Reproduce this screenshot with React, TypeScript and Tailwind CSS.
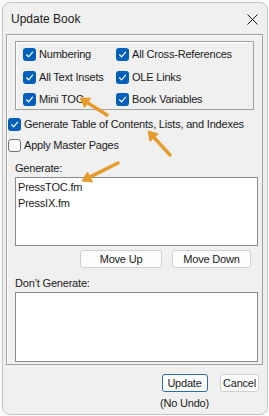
import React, { FC } from "react";

const FONT = "font-['Liberation_Sans',Arial,sans-serif]";
const TXT = "text-[11px] tracking-[-0.2px] text-[#1a1a1a] whitespace-nowrap";

const CheckBox: FC<{ checked?: boolean }> = ({ checked }) => {
    if (!checked) {
        return <span className="block w-[13px] h-[13px] shrink-0 rounded-[3px] border border-[#737373] bg-[#f9f9f9]"></span>;
    }
    return (
        <span className="flex w-[13px] h-[13px] shrink-0 items-center justify-center rounded-[3px] bg-[#005fb8]">
            <svg width="9" height="9" viewBox="0 0 9 9" fill="none">
                <path d="M1.5 4.8 L3.6 6.8 L7.6 2.2" stroke="#fff" strokeWidth="1.2" strokeLinecap="round" strokeLinejoin="round" />
            </svg>
        </span>
    );
};

const Option: FC<{ label: string, checked?: boolean, className?: string }> = ({ label, checked, className }) => (
    <div className={"flex items-center gap-[3px] h-[20px] " + (className ?? "")}>
        <CheckBox checked={checked} />
        <span className={TXT + " leading-none"}>{label}</span>
    </div>
);

const Arrow: FC<{ x1: number, y1: number, x2: number, y2: number }> = ({ x1, y1, x2, y2 }) => {
    // arrowhead points at (x2, y2)
    const len = Math.hypot(x2 - x1, y2 - y1);
    const ux = (x2 - x1) / len;
    const uy = (y2 - y1) / len;
    const head = 9;
    const half = 5.5;
    const bx = x2 - ux * head;
    const by = y2 - uy * head;
    const pts = `${x2},${y2} ${bx - uy * half},${by + ux * half} ${bx + uy * half},${by - ux * half}`;
    return (
        <g>
            <line x1={x1} y1={y1} x2={bx + ux * 1} y2={by + uy * 1} stroke="#e59c2c" strokeWidth="3.5" strokeLinecap="round" />
            <polygon points={pts} fill="#e59c2c" stroke="#e59c2c" strokeWidth="1" strokeLinejoin="round" />
        </g>
    );
};

const btn = "h-[18px] rounded-[3px] border bg-[#fdfdfd] leading-none " + TXT;

const App: FC = () => {
    return (
        <div className={"relative w-[269px] h-[416px] bg-[#f9f9f9] pt-[2px] pl-[2px] " + FONT}>
            <div className="w-[266px] h-[413px] rounded-[8px] border border-[#c4c4c4] bg-[#f0f0f0] flex flex-col">

                <div className="h-[31px] flex items-center justify-between pl-[8px] pr-[9px] pt-[1px]">
                    <span className="text-[12px] text-[#1a1a1a]">Update Book</span>
                    <svg width="11" height="11" viewBox="0 0 11 11">
                        <path d="M0.5 0.5 L10.5 10.5 M10.5 0.5 L0.5 10.5" stroke="#1a1a1a" strokeWidth="1" />
                    </svg>
                </div>

                <div className="ml-[3px] w-[257px] h-[331px] border border-[#a0a0a0] shadow-[inset_1px_1px_0_#ffffff] flex flex-col pl-[8px]">

                    <div className="mt-[6px] w-[239px] h-[69px] border border-[#a0a0a0] shadow-[inset_1px_1px_0_#ffffff] grid grid-cols-[93px_1fr] content-start pt-[1px] pl-[7px]">
                        <Option label="Numbering" checked className="h-[23px]" />
                        <Option label="All Cross-References" checked className="h-[23px]" />
                        <Option label="All Text Insets" checked className="h-[22px]" />
                        <Option label="OLE Links" checked className="h-[22px]" />
                        <Option label="Mini TOC" checked className="h-[23px]" />
                        <Option label="Book Variables" checked className="h-[23px]" />
                    </div>

                    <Option label="Generate Table of Contents, Lists, and Indexes" checked className="-ml-[8px] pl-[1px] mt-[4px] h-[21px]" />
                    <Option label="Apply Master Pages" className="-ml-[8px] pl-[1px] h-[21px]" />

                    <div className={"mt-[4px] h-[16px] flex items-center " + TXT}>Generate:</div>

                    <div className={"mt-[1px] w-[243px] h-[69px] border border-[#8a8a8a] bg-white pl-[2px] pt-[1px] leading-[16px] " + TXT}>
                        <div>PressTOC.fm</div>
                        <div>PressIX.fm</div>
                    </div>

                    <div className="mt-[4px] flex pl-[65px] gap-[10px]">
                        <button className={"w-[82px] border-[#d0d0d0] " + btn}>Move Up</button>
                        <button className={"w-[79px] border-[#d0d0d0] " + btn}>Move Down</button>
                    </div>

                    <div className={"mt-[7px] h-[16px] flex items-center " + TXT}>Don’t Generate:</div>

                    <div className="mt-[1px] w-[243px] h-[70px] border border-[#8a8a8a] bg-white"></div>
                </div>

                <div className="mt-[9px] flex justify-end pr-[8px] gap-[11px]">
                    <div className="flex flex-col items-center">
                        <button className={"w-[46px] border-[#2a6cb0] " + btn}>Update</button>
                        <span className={"mt-[3px] leading-[16px] " + TXT}>(No Undo)</span>
                    </div>
                    <button className={"w-[39px] border-[#d0d0d0] " + btn}>Cancel</button>
                </div>
            </div>

            <svg className="absolute left-0 top-0 pointer-events-none" width="269" height="416">
                <Arrow x1={107} y1={115} x2={80} y2={98} />
                <Arrow x1={170} y1={155} x2={148} y2={131} />
                <Arrow x1={118} y1={163} x2={82} y2={181} />
            </svg>
        </div>
    );
};

export default App;
